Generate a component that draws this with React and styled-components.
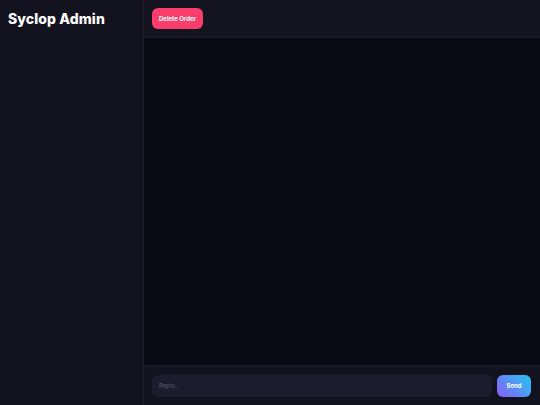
import React from 'react';
import styled, { createGlobalStyle } from "styled-components"

const GlobalStyle = createGlobalStyle`
  html, body, #root {
    margin          : 0;
    padding         : 0;
    height          : 100%;
  }
  body {
    background      : #0b0b13;
    font-family     : "Inter", "Noto Sans", sans-serif;
  }
`

const Layout = styled.div`
  display         : flex;
  width           : 100%;
  height          : 100vh;
  overflow        : hidden;
`

const Sidebar = styled.aside`
  width           : 144px;
  flex-shrink     : 0;
  background      : #13131f;
  border-right    : 1px solid #1d1d2b;
  padding         : 10px 8px;
  box-sizing      : border-box;
`

const Brand = styled.h1`
  margin          : 0;
  color           : #ffffff;
  font-size       : 14px;
  font-weight     : 800;
  letter-spacing  : 0.1px;
  line-height     : 17px;
`

const Main = styled.main`
  flex            : 1;
  display         : flex;
  flex-direction  : column;
  min-width       : 0;
`

const Header = styled.header`
  height          : 37px;
  flex-shrink     : 0;
  display         : flex;
  align-items     : center;
  padding         : 0 8px;
  background      : #141421;
  border-bottom   : 1px solid #1c1c2a;
`

const DangerButton = styled.button`
  height          : 21px;
  padding         : 0 7px;
  border          : none;
  border-radius   : 6px;
  background      : #fb3d6d;
  color           : #ffffff;
  font-family     : inherit;
  font-size       : 6px;
  font-weight     : 700;
  cursor          : pointer;
`

const Messages = styled.section`
  flex            : 1;
  background      : #0a0a12;
`

const Composer = styled.form`
  flex-shrink     : 0;
  display         : flex;
  align-items     : center;
  gap             : 5px;
  height          : 40px;
  padding         : 0 9px 0 8px;
  box-sizing      : border-box;
  background      : #13131f;
  border-top      : 1px solid #1c1c2a;
`

const ReplyInput = styled.input`
  flex            : 1;
  height          : 22px;
  padding         : 0 7px;
  border          : none;
  border-radius   : 6px;
  background      : #1c1c2e;
  color           : #e8e8f0;
  font-family     : inherit;
  font-size       : 6px;
  outline         : none;
  &::placeholder {
    color         : #5c5c72;
  }
`

const SendButton = styled.button`
  width           : 34px;
  height          : 22px;
  border          : none;
  border-radius   : 6px;
  background      : linear-gradient(45deg, #8b5cf6 0%, #22c7f5 100%);
  color           : #ffffff;
  font-family     : inherit;
  font-size       : 6px;
  font-weight     : 700;
  cursor          : pointer;
`

const App = () => {
  const [reply, setReply] = React.useState("");

  return (
    <>
      <GlobalStyle />
      <Layout>
        <Sidebar>
          <Brand>Syclop Admin</Brand>
        </Sidebar>
        <Main>
          <Header>
            <DangerButton type="button">Delete Order</DangerButton>
          </Header>
          <Messages />
          <Composer onSubmit={e => { e.preventDefault(); setReply(""); }}>
            <ReplyInput
              placeholder="Reply..."
              value={reply}
              onChange={e => setReply(e.target.value)}
            />
            <SendButton type="submit">Send</SendButton>
          </Composer>
        </Main>
      </Layout>
    </>
  )
}
export default App;
